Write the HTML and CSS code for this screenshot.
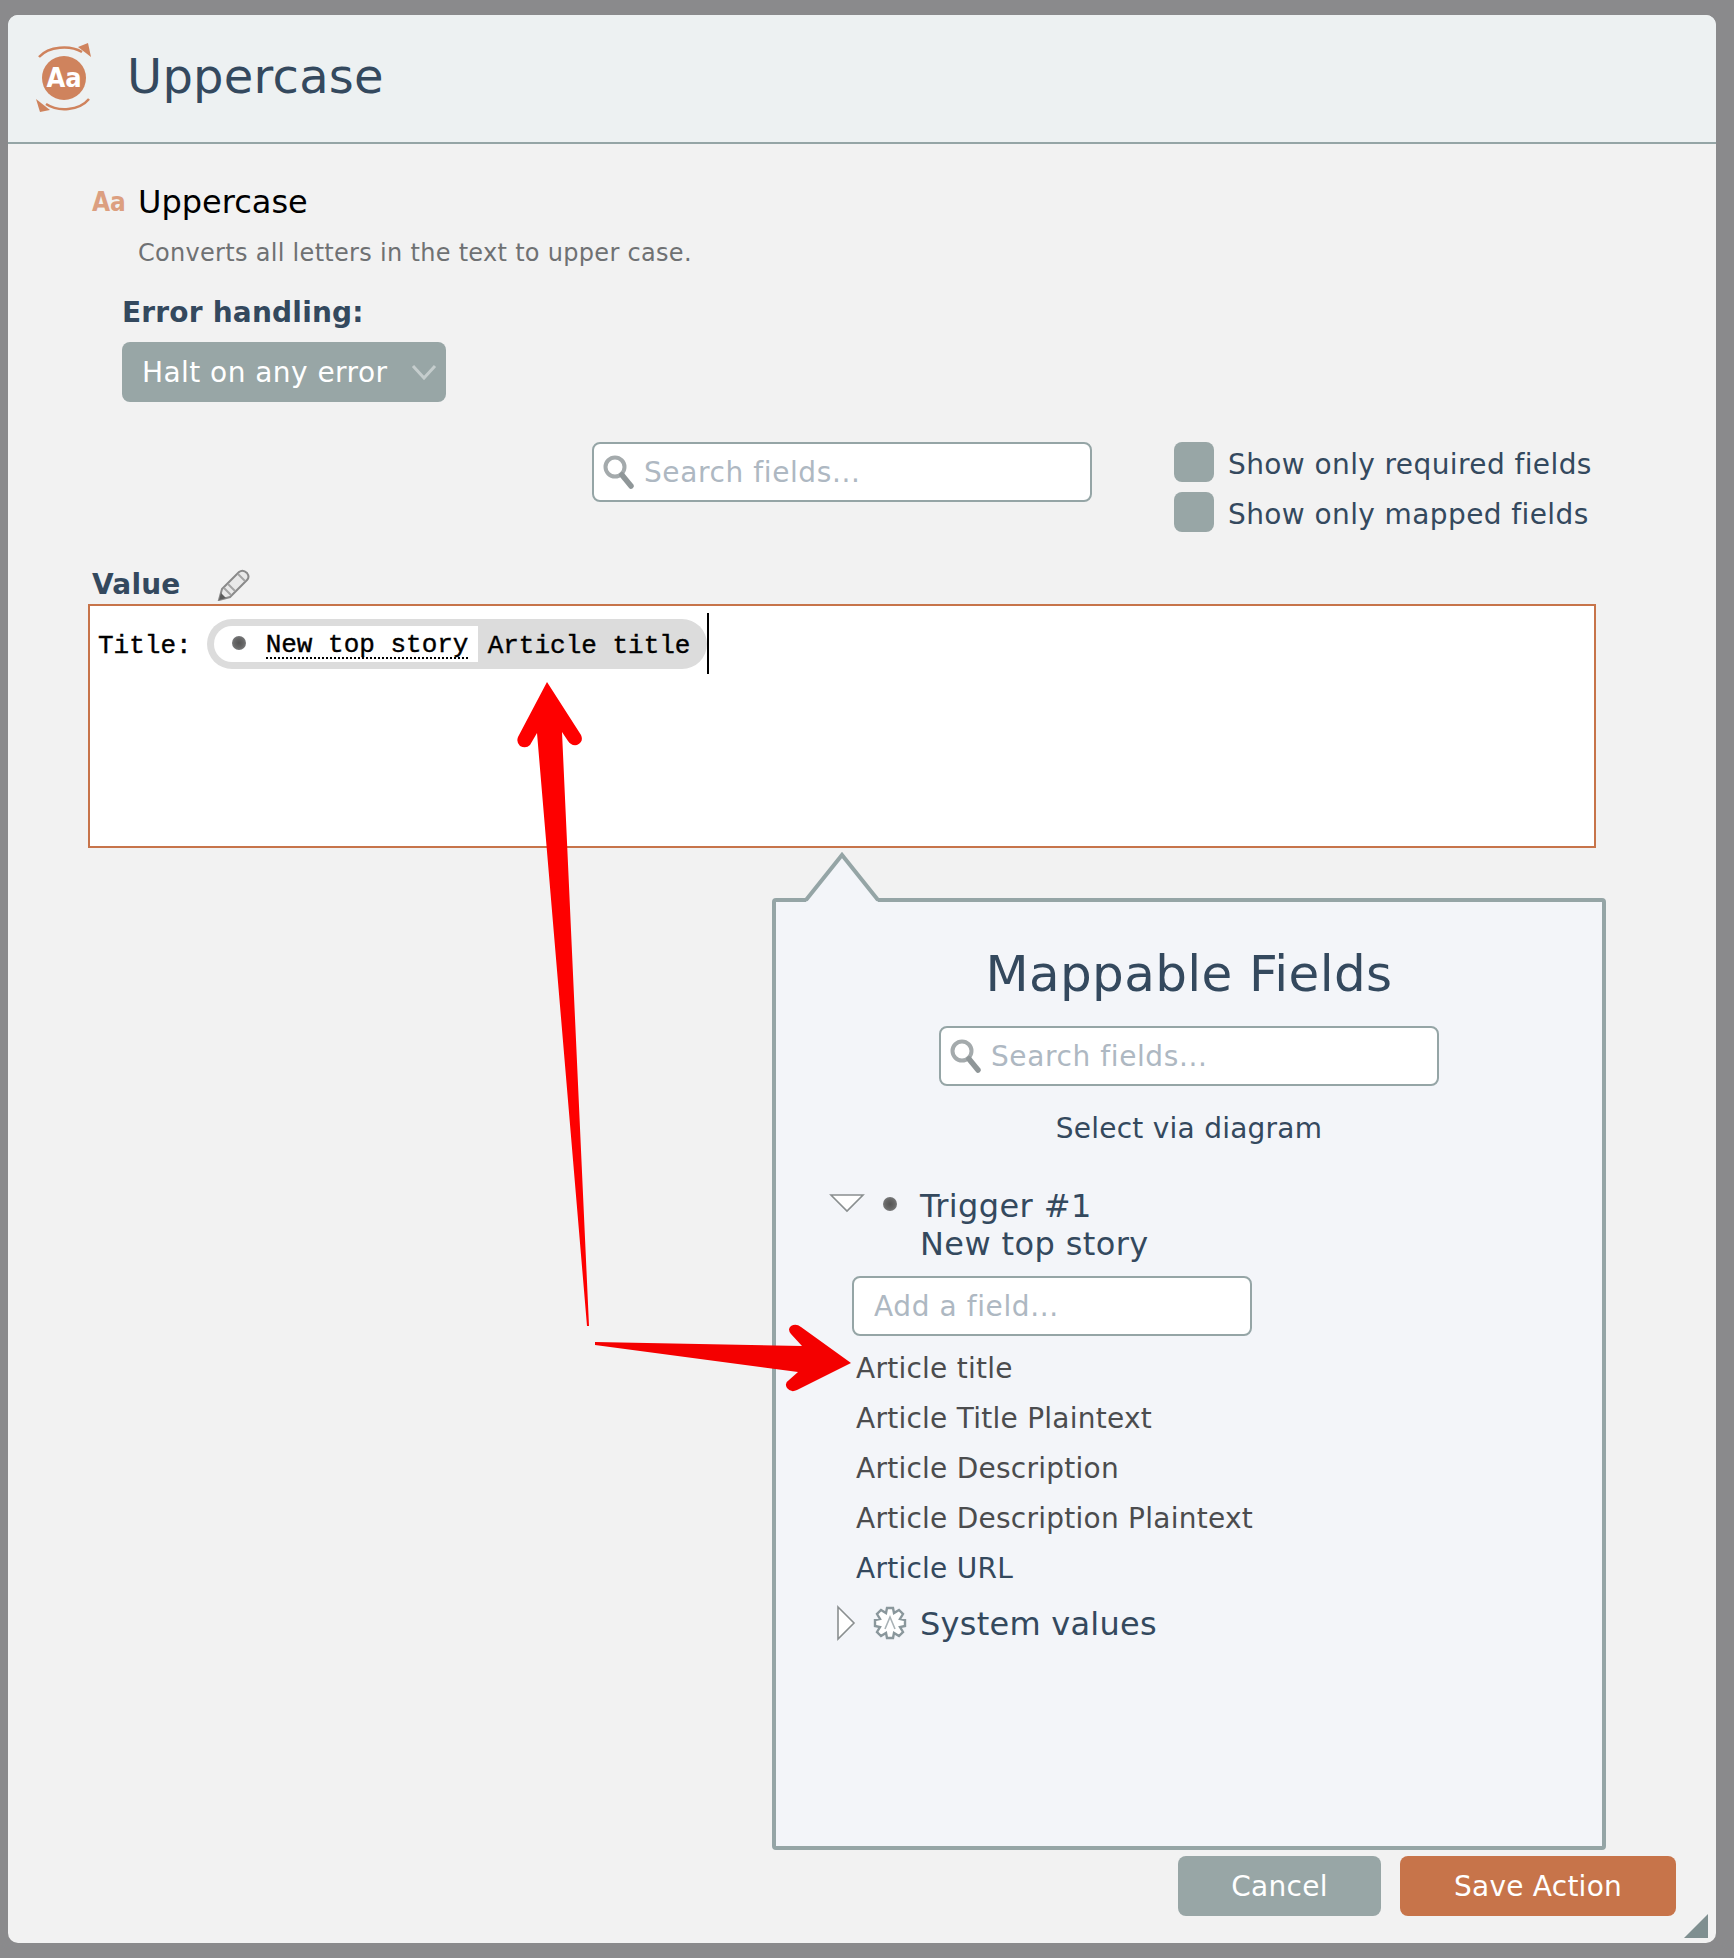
FILE: index.html
```html
<!DOCTYPE html>
<html lang="en">
<head>
    <meta charset="UTF-8">
    <meta name="viewport" content="width=device-width, initial-scale=1.0">
    <title>Uppercase</title>
    <link rel="stylesheet" href="styles.css">
</head>
<body>

<div class="dialog">
    <div class="head">
        <svg class="head-icon" width="60" height="72" viewBox="0 0 60 72">
            <circle cx="30" cy="36" r="22" fill="#cf835d"/>
            <text x="30" y="45" text-anchor="middle" class="head-icon-text">Aa</text>
            <path d="M5 15 C15 4 36 3 48 10" fill="none" stroke="#cf835d" stroke-width="2.5"/>
            <path d="M44 5 L54 1 L57 15 Z" fill="#cf835d"/>
            <path d="M55 57 C45 69 24 70 12 62" fill="none" stroke="#cf835d" stroke-width="2.5"/>
            <path d="M16 68 L6 70 L2 57 Z" fill="#cf835d"/>
        </svg>
        <h1>Uppercase</h1>
    </div>

    <div class="intro">
        <span class="intro-icon">Aa</span>
        <span class="intro-title">Uppercase</span>
    </div>
    <div class="desc">Converts all letters in the text to upper case.</div>

    <div class="label err-label">Error handling:</div>
    <div class="select">
        <span>Halt on any error</span>
        <svg width="26" height="16" viewBox="0 0 26 16"><path d="M2 2 L13 14 L24 2" fill="none" stroke="#c5cdcd" stroke-width="3"/></svg>
    </div>

    <div class="filters">
        <div class="field search">
            <svg class="lens" width="32" height="36" viewBox="0 0 32 36"><circle cx="13" cy="13" r="9.5" fill="#fff" stroke="#a4aaac" stroke-width="4"/><path d="M20 21 L29 32" stroke="#8f9698" stroke-width="5.5" stroke-linecap="round"/></svg>
            <input type="text" placeholder="Search fields...">
        </div>
        <div class="checks">
            <div class="check"><span class="box"></span><span class="check-text">Show only required fields</span></div>
            <div class="check"><span class="box"></span><span class="check-text">Show only mapped fields</span></div>
        </div>
    </div>

    <div class="value-row">
        <span class="label">Value</span>
        <svg class="pencil" width="34" height="32" viewBox="0 0 34 32">
            <path d="M6 20 L23 3 Q27 0 31 4 Q34 8 31 11 L14 28 L3 31 Z" fill="#e9e9e9" stroke="#8a8a8a" stroke-width="2"/>
            <path d="M8 19 L15 26 M12 15 L19 22 M22 5 L29 12" stroke="#a5a5a5" stroke-width="2" fill="none"/>
            <path d="M3 31 L5 24 L10 29 Z" fill="#5c5c5c"/>
        </svg>
    </div>
    <div class="editor">
        <span class="editor-text">Title:</span>
        <span class="pill">
            <span class="pill-app"><span class="dot pill-dot"></span><span class="pill-name">New top story</span></span>
            <span class="pill-field">Article title</span>
        </span>
        <span class="cursor"></span>
    </div>

    <div class="panel">
        <svg class="notch" width="84" height="54" viewBox="0 0 84 54">
            <path d="M6 52 L42 5 L78 52 Z" fill="#f3f5f9"/>
            <path d="M6 50 L42 5 L78 50" fill="none" stroke="#95a5a6" stroke-width="4"/>
        </svg>
        <h2>Mappable Fields</h2>
        <div class="field search panel-search">
            <svg class="lens" width="32" height="36" viewBox="0 0 32 36"><circle cx="13" cy="13" r="9.5" fill="#fff" stroke="#a4aaac" stroke-width="4"/><path d="M20 21 L29 32" stroke="#8f9698" stroke-width="5.5" stroke-linecap="round"/></svg>
            <input type="text" placeholder="Search fields...">
        </div>
        <div class="diagram">Select via diagram</div>

        <div class="trigger">
            <svg class="caret-down" width="36" height="20" viewBox="0 0 36 20"><path d="M2 2 H34 L18 18 Z" fill="#fff" stroke="#8a8f90" stroke-width="1.6"/></svg>
            <span class="dot tree-dot"></span>
            <div class="trigger-name">Trigger #1<br>New top story</div>
        </div>
        <div class="field add-field"><input type="text" placeholder="Add a field..."></div>
        <ul class="items">
            <li>Article title</li>
            <li>Article Title Plaintext</li>
            <li>Article Description</li>
            <li>Article Description Plaintext</li>
            <li class="item-dark">Article URL</li>
        </ul>
        <div class="system">
            <svg class="caret-right" width="20" height="36" viewBox="0 0 20 36"><path d="M2 2 L18 18 L2 34 Z" fill="#fff" stroke="#8a8f90" stroke-width="1.6"/></svg>
            <svg class="gear" width="34" height="34" viewBox="0 0 34 34">
                <path d="M14 2 H20 L21 7 L26 4 L30 8 L27 13 L32 14 V20 L27 21 L30 26 L26 30 L21 27 L20 32 H14 L13 27 L8 30 L4 26 L7 21 L2 20 V14 L7 13 L4 8 L8 4 L13 7 Z" fill="#fff" stroke="#8a979c" stroke-width="2.4"/>
                <path d="M12 23 L17 11 L22 23" fill="none" stroke="#a9b2b6" stroke-width="1.6"/>
            </svg>
            <span class="system-text">System values</span>
        </div>
    </div>

    <div class="footer">
        <button class="btn cancel">Cancel</button>
        <button class="btn save">Save Action</button>
    </div>
    <div class="grip"></div>

    <!-- red annotation arrows on top of the screenshot -->
    <svg class="arrows" width="1734" height="1958" viewBox="0 0 1734 1958">
        <path d="M547 682 L581 735 Q584 742 577 745 Q571 746 568 741 L562 732 L589 1326 L587 1326 L537 733 L530 745 Q526 749 520 746 Q516 742 518 737 Z" fill="#fe0000"/>
        <path d="M595 1342 L802 1346 L791 1334 Q787 1329 791 1326 Q796 1323 801 1327 L851 1363 L797 1390 Q791 1393 787 1388 Q784 1383 789 1380 L798 1372 L595 1345 Z" fill="#f40000"/>
    </svg>
</div>

</body>
</html>
```

FILE: styles.css
```css
* { box-sizing: border-box; }
body { margin: 0; background-color: #8a8a8c; font-family: "DejaVu Sans", Verdana, sans-serif; color: #34495e; font-size: 28px; letter-spacing: 0.25px; }
.dialog { position: relative; display: flex; flex-direction: column; align-items: flex-start; margin: 15px 18px 15px 8px; height: 1928px; background-color: #f2f2f2; border-radius: 10px; }
.head { display: flex; align-items: center; width: 100%; height: 129px; background-color: #edf1f2; border-bottom: 2px solid #95a5a6; border-radius: 10px 10px 0 0; padding-left: 26px; }
.head-icon { margin-top: -2px; }
.head h1 { margin: -6px 0 0 33px; font-size: 48px; font-weight: normal; line-height: 60px; }
.head-icon-text { font-family: "DejaVu Sans", sans-serif; font-stretch: condensed; font-size: 27px; font-weight: bold; fill: #fff; letter-spacing: 0; }

.intro { display: flex; align-items: center; height: 40px; margin: 38px 0 0 84px; }
.intro-icon { width: 46px; color: #dc9f80; font-size: 26px; font-stretch: condensed; font-weight: bold; letter-spacing: 0; }
.intro-title { color: #000; font-size: 32px; letter-spacing: 0; }
.desc { margin: 15px 0 0 130px; line-height: 32px; color: #6f7173; font-size: 24px; letter-spacing: 0.3px; }
.label { font-weight: bold; line-height: 30px; font-size: 28px; letter-spacing: 0.2px; }
.err-label { margin: 29px 0 0 114px; }
.select { display: flex; align-items: center; justify-content: space-between; width: 324px; height: 60px; margin: 14px 0 0 114px; padding: 0 9px 0 20px; background-color: #98a6a6; border-radius: 8px; color: #fff; letter-spacing: 0.45px; }

.filters { display: flex; margin: 40px 0 0 584px; }
.field { display: flex; align-items: center; background-color: #fff; border: 2px solid #95a5a6; border-radius: 8px; height: 60px; }
.field input { flex: 1; min-width: 0; border: none; outline: none; background: transparent; font: inherit; letter-spacing: 0.6px; color: #34495e; }
.field input::placeholder { color: #aeb8c2; opacity: 1; }
.search { width: 500px; padding-left: 8px; }
.search input { padding: 0 0 0 10px; }
.checks { display: flex; flex-direction: column; gap: 10px; margin-left: 82px; }
.check { display: flex; align-items: center; height: 40px; }
.check-text { margin-top: 4px; letter-spacing: 0.4px; }
.box { width: 40px; height: 40px; margin-right: 14px; background-color: #98a6a6; border-radius: 8px; }

.value-row { display: flex; align-items: center; height: 30px; margin: 38px 0 0 84px; }
.pencil { margin-left: 35px; }
.editor { display: flex; align-items: flex-start; width: 1508px; height: 244px; margin: 4px 0 0 80px; padding: 6px 0 0 8px; background-color: #fff; border: 2px solid #c7744a; font-family: "Liberation Mono", "Courier New", monospace; font-size: 26px; letter-spacing: 0; color: #000; -webkit-text-stroke: 0.4px #000; }
.editor-text { margin-top: 19px; line-height: 30px; }
.pill { display: flex; align-items: center; height: 50px; margin: 7px 0 0 15px; padding: 0 17px 0 7px; background-color: #dcdcdc; border-radius: 25px; }
.pill-app { display: flex; align-items: center; height: 36px; width: 264px; padding-left: 18px; background-color: #fff; border-radius: 18px 0 0 18px; }
.pill-name { margin: 4px 0 0 20px; border-bottom: 2px dotted #000; line-height: 24px; }
.pill-field { margin: 4px 0 0 10px; }
.cursor { width: 2px; height: 61px; margin-top: 1px; background-color: #000; }
.dot { flex: none; display: block; width: 14px; height: 14px; background: radial-gradient(circle, #555 0, #666 45%, #8b8d90 100%); border-radius: 50%; }
.pill-dot { margin-top: -3px; }

.panel { position: relative; width: 834px; height: 952px; margin: 50px 0 0 764px; padding-top: 42px; background-color: #f3f5f9; border: 4px solid #95a5a6; border-radius: 4px; display: flex; flex-direction: column; align-items: flex-start; }
.notch { position: absolute; left: 24px; top: -52px; }
.panel h2 { align-self: stretch; margin: 0; text-align: center; font-size: 50px; letter-spacing: 0.35px; font-weight: normal; line-height: 60px; }
.panel-search { align-self: center; margin-top: 22px; }
.diagram { align-self: stretch; margin-top: 28px; text-align: center; line-height: 30px; }
.trigger { position: relative; margin: 43px 0 0 144px; line-height: 38px; font-size: 32px; letter-spacing: 0.4px; }
.caret-down { position: absolute; left: -91px; top: 6px; }
.tree-dot { position: absolute; left: -37px; top: 10px; }
.add-field { width: 400px; margin: 13px 0 0 76px; padding-left: 20px; }
.add-field input { padding: 0; }
.items { list-style: none; margin: 7px 0 0 80px; padding: 0; color: #4b4c4e; }
.items li { height: 50px; line-height: 52px; }
.items .item-dark { color: #34495e; }
.system { display: flex; align-items: center; height: 60px; margin-left: 60px; font-size: 32px; }
.gear { margin-left: 17px; margin-right: 13px; }
.system-text { margin-top: 2px; }

.footer { display: flex; justify-content: flex-end; gap: 19px; align-self: stretch; margin-top: 6px; padding-right: 40px; }
.btn { height: 60px; border: none; border-radius: 8px; color: #fff; font: inherit; letter-spacing: 0.25px; }
.cancel { width: 203px; background-color: #98a6a6; }
.save { width: 276px; background-color: #c7744a; }
.grip { position: absolute; right: 8px; bottom: 5px; width: 0; height: 0; border-left: 24px solid transparent; border-bottom: 24px solid #7f8f90; }
.arrows { position: absolute; left: -8px; top: -15px; pointer-events: none; }
```
